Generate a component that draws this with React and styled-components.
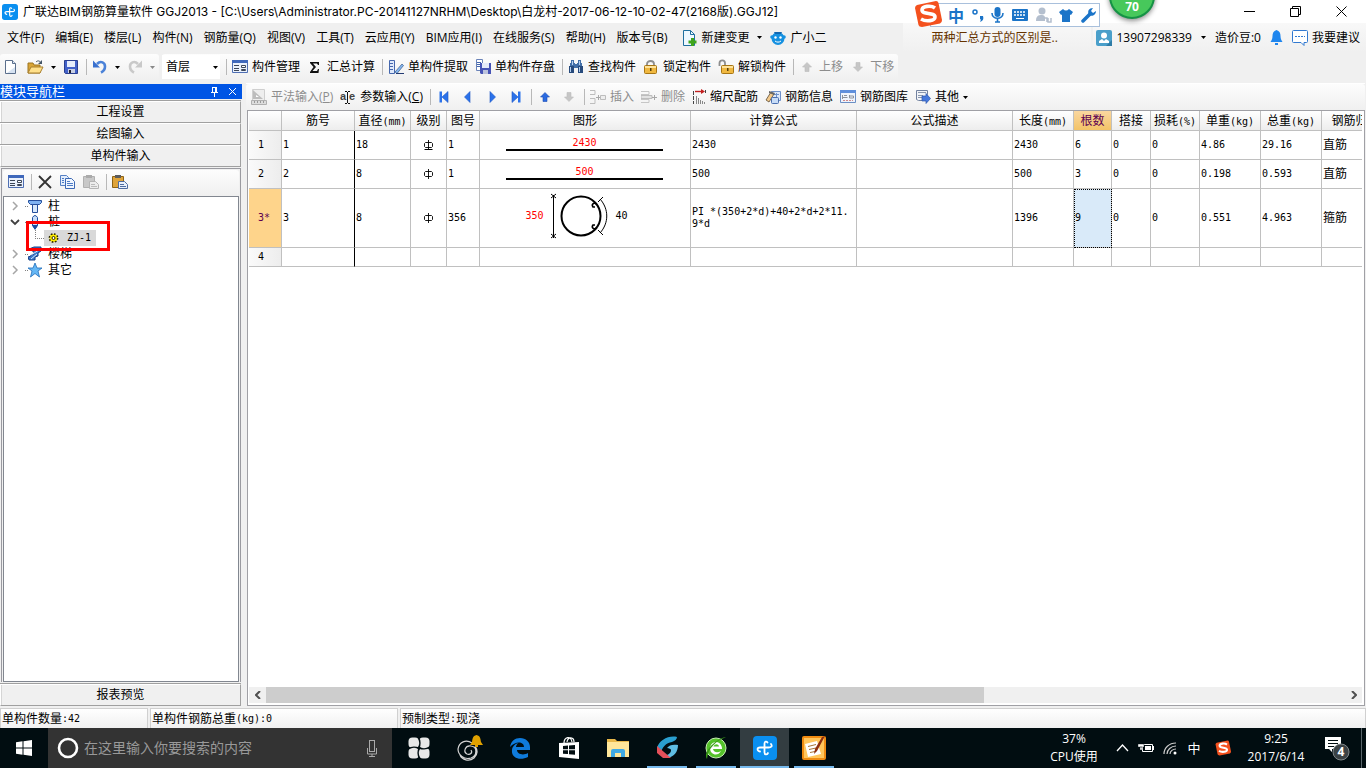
import React, { useState } from 'react';
import styled, { createGlobalStyle } from 'styled-components';

const uiFont = `'Open Sans', 'Noto Sans CJK SC', sans-serif`;
const gridFont = `'DejaVu Sans Mono', 'Noto Sans CJK SC', monospace`;

const GlobalStyle = createGlobalStyle`
  * { box-sizing: border-box; }
  body {
    margin: 0;
    overflow: hidden;
    background: #f0f0f0;
    color: #000;
    font: 12px/16px ${uiFont};
  }
  button, input, select {
    font: inherit;
    color: inherit;
    margin: 0;
    padding: 0;
    border: 0;
    border-radius: 0;
    background: transparent;
  }
  svg { display: block; flex: none; }
`;

const Page = styled.div`
  height: 100vh;
  display: flex;
  flex-direction: column;
  position: relative;
`;

/* ---------- title bar ---------- */

const TitleBar = styled.header`
  height: 23px;
  flex: none;
  display: flex;
  align-items: center;
  background: #fff;
  padding: 0 2px;
`;

const Title = styled.h1`
  flex: 1;
  margin: 0 0 0 5px;
  font: 12px/16px Inter, 'Noto Sans CJK SC', sans-serif;
  white-space: nowrap;
`;

const WindowButton = styled.button`
  width: 46px;
  height: 20px;
  display: flex;
  align-items: center;
  justify-content: center;
`;

/* ---------- menu ---------- */

const MenuRow = styled.div`
  height: 31px;
  flex: none;
  display: flex;
  align-items: flex-start;
`;

const Menu = styled.nav`
  flex: 1;
  height: 29px;
  padding-left: 7px;
  display: flex;
  align-items: center;
  gap: 11px;
`;

const MenuItem = styled.button`
  display: flex;
  align-items: center;
  gap: 4px;
  white-space: nowrap;
`;

const MenuExtras = styled.div`
  margin-left: 4px;
  display: flex;
  align-items: center;
  gap: 8px;
`;

const Notice = styled.a`
  width: 188px;
  height: 29px;
  padding-left: 28px;
  display: flex;
  align-items: center;
  color: #663300;
  text-decoration: none;
  background: linear-gradient(#f8f8f8, #f0f0f0);
`;

const Account = styled.div`
  height: 29px;
  margin-left: 2px;
  padding: 0 6px 0 3px;
  display: flex;
  align-items: center;
  gap: 9px;
  background: linear-gradient(#f8f8f8, #f0f0f0);
`;

/* ---------- toolbars ---------- */

const ToolRow = styled.div`
  height: 26px;
  flex: none;
  display: flex;
  gap: 3px;
`;

const Tools = styled.div`
  height: 26px;
  padding: 0 4px;
  display: flex;
  align-items: center;
  gap: 7px;
  border-radius: 3px;
  background: linear-gradient(#fdfdfd, #f0f0f0);
`;

const GridTools = styled(Tools)`
  flex: none;
  padding: 0 5px;
`;

const ToolButton = styled.button`
  display: flex;
  align-items: center;
  gap: 4px;
  white-space: nowrap;
  &:disabled { color: #8d8d8d; }
`;

const Group = styled.div`
  display: flex;
  align-items: center;
  gap: 8px;
`;

const Sep = styled.i`
  width: 1px;
  height: 16px;
  margin-right: -2px;
  background: #b8b8b8;
`;

const LevelBox = styled.label`
  position: relative;
  width: 58px;
  height: 24px;
  margin: 0 -1px 0 -4px;
  display: flex;
  align-items: center;
  background: #fff;
  svg { position: absolute; right: 2px; pointer-events: none; }
`;

const LevelSelect = styled.select`
  width: 100%;
  height: 24px;
  padding-left: 4px;
  appearance: none;
`;

/* ---------- left dock ---------- */

const Main = styled.main`
  flex: 1;
  min-height: 0;
  display: flex;
  padding-top: 3px;
`;

const Dock = styled.aside`
  width: 242px;
  flex: none;
  display: flex;
  flex-direction: column;
  margin: 1px 4px 0 0;
`;

const DockHead = styled.div`
  height: 15px;
  margin-bottom: 2px;
  display: flex;
  align-items: center;
  background: #0055e5;
  color: #fff;
  padding-right: 2px;
  gap: 6px;
  h2 {
    flex: 1;
    margin: 0;
    font-size: 13px;
    line-height: 15px;
    font-weight: 400;
  }
`;

const DockButton = styled.button`
  height: 22px;
  flex: none;
  margin-right: 1px;
  border: 1px solid #a0a0a0;
  border-top-color: #fff;
  border-left-color: #fff;
  background: #f0f0f0;
  box-shadow: inset 1px 0 #d5d5d5, 0 -1px #a0a0a0;
`;

const DockBody = styled.div`
  flex: 1;
  min-height: 0;
  margin: 1px 1px 2px 1px;
  padding: 1px 1px 0;
  display: flex;
  flex-direction: column;
  border: 1px solid #9a9aa0;
  border-width: 1px 1px 0 1px;
`;

const DockTools = styled(Tools)`
  height: 26px;
  flex: none;
  padding: 0 5px 2px;
`;

const Tree = styled.ul`
  flex: 1;
  margin: 0;
  padding: 1px 0 0 5px;
  list-style: none;
  position: relative;
  background: #fff;
  border: 1px solid #828790;
`;

const TreeItem = styled.li`
  height: 16px;
  display: flex;
  align-items: center;
  padding-left: ${props => (props.$child ? '12px' : '0')};
`;

const Expander = styled.button`
  width: 12px;
  height: 16px;
  display: flex;
  align-items: center;
  justify-content: center;
`;

const Dots = styled.i`
  width: 7px;
  padding-left: 4px;
  &::before {
    content: '';
    display: block;
    border-top: 1px dotted #808080;
  }
`;

const TreeLabel = styled.button`
  height: 16px;
  display: flex;
  align-items: center;
  gap: 6px;
  ${props => props.$selected && `
    gap: 8px;
    padding: 0 5px 0 4px;
    background: #d9d9d9;
  `}
`;

const RedMark = styled.div`
  position: absolute;
  left: 22px;
  top: 24px;
  width: 84px;
  height: 30px;
  border: 3px solid #fe0000;
  pointer-events: none;
`;

/* ---------- grid ---------- */

const Work = styled.section`
  flex: 1;
  min-width: 0;
  margin-right: 1px;
  display: flex;
  flex-direction: column;
  border-top: 1px solid #fff;
`;

const GridFrame = styled.div`
  flex: 1;
  min-height: 0;
  margin-left: 1px;
  display: flex;
  flex-direction: column;
  background: #fff;
  border: 1px solid #a0a0a5;
  padding: 0 2px 2px 1px;
`;

const GridScroll = styled.div`
  flex: 1;
  min-height: 0;
  overflow: hidden;
`;

const Table = styled.table`
  width: 1141px;
  table-layout: fixed;
  border-collapse: separate;
  border-spacing: 0;
`;

const Th = styled.th`
  height: 20px;
  padding: 0;
  font-weight: 400;
  line-height: 16px;
  white-space: nowrap;
  border-right: 1px solid #c0c0c0;
  border-bottom: 1px solid #c0c0c0;
  background: linear-gradient(#fff, #ededed);
  ${props => props.$active && `
    color: #5c0050;
    background: linear-gradient(#fad7a0, #f3c367);
  `}
`;

const RowHead = styled(Th)`
  height: auto;
  font: 10px/12px ${gridFont};
  padding-right: 8px;
  background: linear-gradient(90deg, #fafafa, #ededed);
  ${props => props.$active && `
    padding-right: 2px;
    color: #5c0050;
    background: #fed48b;
  `}
`;

const Td = styled.td`
  height: ${props => props.$h}px;
  padding: 0 2px 0 1px;
  overflow: hidden;
  border-right: 1px solid ${props => (props.$dark ? '#000' : '#c0c0c0')};
  border-bottom: 1px solid #c0c0c0;
  font: 10px/12px ${gridFont};
  word-break: break-all;
  ${props => props.$selected && `
    background: #d9eaf9;
    outline: 1px dotted #000;
    outline-offset: -1px;
  `}
`;

const Latin = styled.span`
  font: 10px/12px ${gridFont};
`;

const Kind = styled.span`
  font: 12px/16px ${uiFont};
`;

const BarShape = styled.div`
  width: 157px;
  margin: -2px auto 0;
  text-align: center;
  color: #f00;
  border-bottom: 2px solid #000;
`;

const HoopShape = styled.div`
  display: flex;
  align-items: center;
  justify-content: center;
  gap: 3px;
  padding: 0 16px 4px 0;
  em { font-style: normal; color: #f00; }
`;

const Center = styled.div`
  display: flex;
  justify-content: center;
`;

const ScrollBar = styled.div`
  height: 16px;
  flex: none;
  display: flex;
  background: #f0f0f0;
`;

const ScrollButton = styled.button`
  width: 17px;
  display: flex;
  align-items: center;
  justify-content: center;
`;

const Track = styled.div`
  flex: 1;
`;

const Thumb = styled.div`
  width: 66.5%;
  height: 16px;
  background: #cdcdcd;
`;

/* ---------- status bar ---------- */

const StatusBar = styled.footer`
  height: 22px;
  flex: none;
  display: flex;
  gap: 2px;
  padding-top: 2px;
`;

const StatusCell = styled.div`
  width: ${props => (props.$w ? `${props.$w}px` : 'auto')};
  flex: ${props => (props.$w ? 'none' : '1')};
  padding-left: 1px;
  display: flex;
  align-items: center;
  border: 1px solid #d0d0d0;
  border-bottom: 0;
  background: linear-gradient(#fff, #f0f0f0);
`;

/* ---------- task bar ---------- */

const TaskBar = styled.div`
  height: 40px;
  flex: none;
  display: flex;
  background: #010d11;
  color: #fff;
`;

const StartButton = styled.button`
  width: 48px;
  display: flex;
  align-items: center;
  justify-content: center;
`;

const Search = styled.label`
  width: 344px;
  margin-right: 1px;
  padding: 0 12px 0 9px;
  display: flex;
  align-items: center;
  gap: 5px;
  background: #333;
  input {
    flex: 1;
    min-width: 0;
    font-size: 14px;
    outline: 0;
  }
  input::placeholder { color: #999; opacity: 1; }
`;

const TaskButton = styled.button`
  width: ${props => (props.$wide ? '51px' : '49px')};
  display: flex;
  align-items: center;
  justify-content: center;
  background: ${props => (props.$active ? '#333d41' : 'transparent')};
  ${props => props.$line && `
    background: linear-gradient(#76b9ed, #76b9ed) center bottom / ${props.$line}px 2px no-repeat ${props.$active ? '#333d41' : 'transparent'};
  `}
`;

const Tray = styled.div`
  margin-left: auto;
  display: flex;
  align-items: center;
`;

const TrayText = styled.div`
  width: 72px;
  text-align: center;
  line-height: 18px;
`;

const TrayButton = styled.button`
  width: ${props => (props.$wide ? '34px' : '24px')};
  height: 40px;
  display: flex;
  align-items: center;
  justify-content: center;
  font-size: 13px;
`;

const NoticeButton = styled(TrayButton)`
  width: 50px;
  border-right: 1px solid #59656a;
  margin-right: 4px;
`;

/* ---------- floating widgets ---------- */

const ImeBar = styled.div`
  position: absolute;
  right: 266px;
  top: 0;
  display: flex;
`;

const ImeBody = styled.div`
  width: 170px;
  height: 24px;
  margin-top: 3px;
  padding: 0 3px 0 17px;
  display: flex;
  align-items: center;
  justify-content: space-between;
  color: #1b74c8;
  background: #fff;
  border: 1px solid #a9c0dc;
  font: bold 16px/20px 'Noto Sans CJK SC', sans-serif;
`;

const ImeLogo = styled.div`
  position: absolute;
  left: -16px;
  top: 0;
`;

const Ball = styled.div`
  position: absolute;
  right: 211px;
  top: -27px;
  width: 46px;
  height: 46px;
  padding-top: 24px;
  border-radius: 50%;
  border: 2px solid #159245;
  color: #fff;
  text-align: center;
  font: bold 12px/16px ${uiFont};
  background: #47c85b;
  box-shadow: 0 2px 5px rgba(0, 0, 0, 0.45);
`;

/* ---------- icons ---------- */

const Svg = ({ s = 16, w, h, vb, children }) => (
  <svg width={w || s} height={h || s} viewBox={vb || `0 0 ${w || s} ${h || s}`} fill="none" aria-hidden="true">
    {children}
  </svg>
);

const Caret = ({ off }) => (
  <Svg w={5} h={3}><path d="M0 0h5L2.5 3z" fill={off ? '#888' : '#000'} /></Svg>
);

const AppIcon = ({ s = 16 }) => (
  <Svg s={s} vb="0 0 24 24">
    <rect width="24" height="24" rx="4" fill="#0a8ff0" />
    <path d="M14.500 6.500c-1-1.500-3-1-3 1v9c0 2.500 3 2.500 3.500.500" stroke="#fff" strokeWidth="1.800" strokeLinecap="round" />
    <path d="M7 15.500c-3-.500-3.500-4 0-4h8.500c3 0 4-1.500 2.500-3.500" stroke="#fff" strokeWidth="1.800" strokeLinecap="round" />
  </Svg>
);

const NewIcon = () => (
  <Svg><path d="M1.500 1.500h7l3 3v10h-10z" fill="#fff" stroke="#5b6f8c" /><path d="M8.500 1.500v3h3" stroke="#5b6f8c" fill="#dfe9f5" /><path d="M3 14h8V8z" fill="#d7e3f2" /></Svg>
);

const OpenIcon = () => (
  <Svg w={17} h={16}><path d="M1 4h5l1 2h6v8H1z" fill="#d9a536" stroke="#9c7420" /><path d="M4 8h12l-3 6H1z" fill="#ffe08a" stroke="#a98030" /><path d="M9 3c2-2 4-1 5 1" stroke="#456" /><path d="M15 1v4h-4z" fill="#456" /></Svg>
);

const SaveIcon = () => (
  <Svg><path d="M1.500 1.500h13v13h-12l-1-1z" fill="#4261c9" stroke="#2a3f8f" /><path d="M4 2h8v6H4z" fill="#e6edfb" /><path d="M5 10h7v4H5z" fill="#c8d0e4" /><path d="M6 11h2v3H6z" fill="#223" /></Svg>
);

const UndoIcon = ({ flip, off }) => (
  <Svg>
    <g transform={flip ? 'matrix(-1 0 0 1 16 0)' : undefined}>
      <path d="M5 5c4-4 8-1 8 2.500 0 3-2 5-4 6" stroke={off ? '#c9c9c9' : '#4b82d8'} strokeWidth="2.600" />
      <path d="M1 1.500v7h7z" fill={off ? '#c9c9c9' : '#3970cf'} />
    </g>
  </Svg>
);

const FormIcon = () => (
  <Svg>
    <path d="M.500 1.500h15v12H.500z" fill="#eaf1fc" stroke="#4f6fb3" />
    <path d="M0 1h16v3H0z" fill="#3f68bb" />
    <path d="M2 6.500h5M2 9.500h5M2 11.500h5" stroke="#3c4658" />
    <path d="M9.500 6.500h4v2h-4zM9.500 10.500h4v1h-4z" fill="#fff" stroke="#3c4658" />
  </Svg>
);

const SumIcon = () => (
  <Svg><path d="M3 3h9v3h-1l-1-1.500H6L9 8l-3.500 4H10l1-2h1l-.500 4H3v-1l3.500-5L3 4z" fill="#111" /></Svg>
);

const ExtractIcon = () => (
  <Svg><path d="M1.500 1.500h5v13h-5z" fill="#dfe9fb" stroke="#4567ad" /><path d="M2 4.500h3M2 7.500h3M2 10.500h3" stroke="#4567ad" /><path d="M7 13L14 5l1.500 1.500L9 14.500z" fill="#87b6f0" stroke="#365a86" strokeWidth=".7" /><path d="M8 14.500h8" stroke="#223a72" /></Svg>
);

const StoreIcon = () => (
  <Svg><path d="M1.500.500h6v11h-6z" fill="#fff" stroke="#6a83b8" /><path d="M2 3.500h4M2 5.500h4M2 7.500h4" stroke="#4567ad" /><path d="M5 4h11v11H6l-1-1z" fill="#4653b5" /><path d="M7 4h7v5H7z" fill="#e4e9f8" /><path d="M8 11h5v4H8z" fill="#bcc3dd" /></Svg>
);

const FindIcon = () => (
  <Svg><path d="M3 1h3v3H3zM10 1h3v3h-3zM2 4h5v4H2zM9 4h5v4H9zM6 5h4v4H6z" fill="#426fa8" /><path d="M1 7h5v7H1zM10 7h5v7h-5z" fill="#274a7c" /><path d="M2 8h1v5H2zM11 8h1v5h-1zM4 2h1v4H4zM11 2h1v4h-1z" fill="#b5d0f0" /></Svg>
);

const LockIcon = ({ open }) => (
  <Svg>
    <path d={open ? 'M1.500 7V4c0-3.500 5.500-3.500 5.500 0v2' : 'M4 8V5c0-4 7-4 7 0v3'} stroke="#8e8e8e" strokeWidth="1.800" />
    <g transform={open ? 'translate(2 0)' : undefined}>
      <rect x="1.500" y="6.500" width="12" height="8" rx="1" fill="#f0b840" stroke="#a87614" />
      <path d="M2 7h11v2H2z" fill="#ffe39a" />
      <path d="M7 9h1.500v3H7z" fill="#59400b" />
    </g>
  </Svg>
);

const ArrowIcon = ({ down, off }) => (
  <Svg>
    <path transform={down ? 'rotate(180 8 8)' : undefined} d="M8 3.500l4.500 4.500H10v4.500H6V8H3.500z" fill={off ? '#c6c6c6' : '#2b6ae0'} stroke={off ? '#bcbcbc' : '#1c4eb4'} strokeWidth=".6" />
  </Svg>
);

const StepIcon = ({ back, end }) => (
  <Svg>
    <g transform={back ? 'matrix(-1 0 0 1 16 0)' : undefined}>
      <path d={end ? 'M4 2.500v11L10 8z' : 'M6 2.500v11L11.500 8z'} fill="#2b72ea" stroke="#1c56c4" strokeWidth=".6" />
      {end && <path d="M10 2.500h2.500v11H10z" fill="#2b72ea" />}
    </g>
  </Svg>
);

const RulerIcon = () => (
  <Svg><path d="M1.500.500h12v11h-12z" fill="#eee" stroke="#cfcfcf" /><path d="M2 1l10 9H2z" fill="#bdbdbd" /><path d="M5 6v2h3z" fill="#fff" /><path d="M.500 11.500h15v4H.500z" fill="#ddd" stroke="#b0b0b0" /><path d="M3.500 12v2M6.500 12v2M9.500 12v2M12.500 12v2" stroke="#999" /></Svg>
);

const ParamIcon = () => (
  <Svg>
    <text x="0" y="11" fontSize="11" fontWeight="700" fontFamily="Liberation Sans, sans-serif" fill="#444">a</text>
    <text x="9" y="11" fontSize="11" fontWeight="700" fontFamily="Liberation Sans, sans-serif" fill="#444">e</text>
    <path d="M5 2.500h2M8 2.500h2M7.500 3v11M5 14.500h2M8 14.500h2" stroke="#111" />
  </Svg>
);

const InsertIcon = () => (
  <Svg><path d="M0 1.500h5v4H0M0 9.500h5v5H0" stroke="#bdbdbd" /><path d="M6 8.500h4M8.500 6v5" stroke="#a8a8a8" /><path d="M10.500 6.500h5v4h-5z" fill="#eee" stroke="#bdbdbd" /></Svg>
);

const DeleteRowIcon = () => (
  <Svg><path d="M0 2.500h8v3H0M0 10.500h8v3H0" stroke="#c6c6c6" /><path d="M0 6.500h11v3H0z" fill="#e2e2e2" stroke="#bdbdbd" /><path d="M11 8.500h5M13.500 6v5" stroke="#a8a8a8" /></Svg>
);

const ScaleIcon = () => (
  <Svg w={14} h={16}><path d="M1.500 2v13" stroke="#444" strokeDasharray="4 1" /><path d="M13.500 1v3" stroke="#444" /><path d="M3 2.500h7" stroke="#c22020" strokeWidth="1.400" /><path d="M9 0l4 2.500L9 5z" fill="#c22020" /><path d="M4.500 7v8M6.500 9v6M8.500 11v4M10.500 12v3M12.500 13v2" stroke="#888" /></Svg>
);

const InfoIcon = () => (
  <Svg><path d="M6.500 2.500h9v9h-9z" fill="#dce9fb" stroke="#6f91ca" /><path d="M8 5.500h6M11.500 4v7" stroke="#6f91ca" /><path d="M1 11L6 3l3 2-5 8z" fill="#f3c98b" stroke="#5c4b34" strokeWidth=".8" /><path d="M4 2l6 2-1 2-5-2z" fill="#666" /><rect x="6.500" y="8.500" width="7" height="6" rx="1" fill="#c7dcf7" stroke="#4a6fb0" /></Svg>
);

const LibIcon = () => (
  <Svg><path d="M.500 1.500h15v12H.500z" fill="#eef4fd" stroke="#6b8fc4" /><path d="M0 1h16v3H0z" fill="#5e8fdc" /><path d="M2.500 6v4M2.500 8.500h5M4 6.500h3M9.500 6v3h4v-2h-4" stroke="#8b929c" /><path d="M3 11.500h10" stroke="#d08a8a" strokeDasharray="2 1" /></Svg>
);

const MoreIcon = () => (
  <Svg><path d="M1.500 1.500h11v4l-2 6h-7l-2-1z" fill="#f2f4f8" stroke="#7282a0" /><path d="M3 3.500h8M3 6.500h5M3 8.500h4" stroke="#8a97ad" /><path d="M7 7h4V4.500l4.500 5-4.500 5V12H7z" fill="#4779dc" stroke="#2b57ac" strokeWidth=".7" /></Svg>
);

const NewChangeIcon = () => (
  <Svg w={15} h={16}><path d="M1.500.500h7l4 4v11h-11z" fill="#eef8ff" stroke="#1f6f9f" /><path d="M8.500.500v4h4" stroke="#1f6f9f" /><path d="M9 8h3v2.500h2.500v3H12V16H9v-2.500H6.500v-3H9z" fill="#3fa51c" /></Svg>
);

const MascotIcon = () => (
  <Svg>
    <circle cx="8" cy="8.500" r="6.500" fill="#1590e0" />
    <circle cx="2" cy="7" r="1.800" fill="#1590e0" />
    <circle cx="14" cy="7" r="1.800" fill="#1590e0" />
    <path d="M4 2h8l-1 2H5z" fill="#1267b0" />
    <circle cx="5.500" cy="7.500" r="1.200" fill="#fff" />
    <circle cx="10.500" cy="7.500" r="1.200" fill="#fff" />
    <path d="M5 11c2 1.500 4 1.500 6 0" stroke="#fff" />
  </Svg>
);

const UserIcon = () => (
  <Svg><rect width="16" height="16" rx="2" fill="#4a9fca" /><path d="M10 16l6-6v6z" fill="#2f7ca6" /><circle cx="8" cy="5.500" r="3" fill="#fff" /><path d="M3 13V11l3-2 2 2 2-2 3 2v2z" fill="#fff" /></Svg>
);

const BellIcon = () => (
  <Svg w={13} h={15}><path d="M6.500 0c3 1 4 3 4 6 0 3 1 4 2 6H.500c1-2 2-3 2-6 0-3 1-5 4-6z" fill="#1f86ee" /><path d="M5 13h3v2H5z" fill="#1f86ee" /></Svg>
);

const BubbleIcon = () => (
  <Svg><path d="M1.500.500h13q1 0 1 1v10q0 1-1 1H12v3l-3-3H1.500q-1 0-1-1v-10q0-1 1-1z" stroke="#3179d0" fill="#fff" /><path d="M3 6.500h10" stroke="#3179d0" strokeDasharray="2 1" /></Svg>
);

const CrossIcon = () => (
  <Svg><path d="M2 2l12 12M14 2L2 14" stroke="#333" strokeWidth="1.800" /></Svg>
);

const CopyIcon = () => (
  <Svg><path d="M.500 1.500h6l2 2v8h-8z" fill="#e4eefc" stroke="#5580c4" /><path d="M5.500 4.500h6l3 3v7h-9z" fill="#f0f6ff" stroke="#3c69b5" /><path d="M7 7.500h3M7 9.500h6M7 11.500h6M2 4.500h2M2 6.500h2M2 8.500h2" stroke="#4d7cc6" /></Svg>
);

const PasteIcon = ({ off }) => (
  <Svg><path d="M.500 2.500h11v11h-11z" fill={off ? '#c8c8c8' : '#dfa43a'} stroke={off ? '#b0b0b0' : '#8d6316'} /><path d="M3 1h6v3H3z" fill={off ? '#aaa' : '#5c5c5c'} /><path d="M6.500 7.500h6l3 3v4h-9z" fill={off ? '#ededed' : '#e8f0fc'} stroke={off ? '#b5b5b5' : '#4f6c9f'} /><path d="M8 10.500h4M8 12.500h6" stroke={off ? '#bbb' : '#4f6c9f'} /></Svg>
);

const PinIcon = () => (
  <Svg w={9} h={10}><path d="M2.500 1v4M2 .500h5M1 5.500h7M4.500 6v4" stroke="#fff" /><path d="M5 1h2v4H5z" fill="#fff" /></Svg>
);

const ChevronIcon = ({ open }) => (
  <Svg w={10} h={10}>
    {open ? <path d="M1 3l4 4 4-4" stroke="#404040" strokeWidth="1.800" /> : <path d="M3 1l4 4-4 4" stroke="#a6a6a6" strokeWidth="1.500" />}
  </Svg>
);

const treeIcons = {
  column: <Svg w={14} h={16}><path d="M.500 2.500h13v2l-2 2h-9l-2-2z" fill="#7fb2f2" stroke="#244e9b" /><path d="M4.500 6.500h5v8h-5z" fill="#d7e9fd" stroke="#244e9b" /></Svg>,
  pile: <Svg w={14} h={16}><path d="M4.500 3.500q2.500-4 5 0v8L7 15l-2.500-3.500z" fill="#c8defa" stroke="#1c4ea0" /><path d="M4 11h6l-3 5z" fill="#1c4ea0" /></Svg>,
  stair: <Svg w={14} h={16}><path d="M1 3l5-2h7v4l-3 2v3l-3 1v3H1l-1-3 3-1V9l3-1V6z" fill="#3c78cc" stroke="#173f86" /><path d="M3 5l7-2M3 9l8-5M3 13l6-5" stroke="#d8e8fc" /></Svg>,
  other: <Svg w={14} h={16}><path d="M7 1l2 5h5l-4 3 1.500 6L7 11.500 2.500 15 4 9 0 6h5z" fill="#65b7f5" stroke="#1f6cba" strokeWidth=".8" /></Svg>,
};

const GearIcon = () => (
  <Svg w={11} h={11}>
    <circle cx="5.500" cy="5" r="4" fill="#ffee00" stroke="#2a2700" strokeWidth="1.800" strokeDasharray="1.600 1.540" />
    <circle cx="5.500" cy="5" r="3.200" fill="#ffee00" />
    <circle cx="5.500" cy="5" r="1.500" fill="#fff" stroke="#2a2700" />
  </Svg>
);

const SogouIcon = ({ s }) => (
  <Svg s={s} vb="0 0 28 28">
    <path d="M3 5L22 1q2 0 2.500 2L28 20q0 3-2 3.500L8 27q-3 0-3.500-2L1 8q0-2 2-3z" fill="#f4511e" />
    <path d="M21 8c-4-3-13-2-13 2 0 5 13 2 13 7 0 4-9 5-14 2" stroke="#fff" strokeWidth="3.600" />
  </Svg>
);

/* ---------- data ---------- */

const menus = ['文件(F)', '编辑(E)', '楼层(L)', '构件(N)', '钢筋量(Q)', '视图(V)', '工具(T)', '云应用(Y)', 'BIM应用(I)', '在线服务(S)', '帮助(H)', '版本号(B)'];

const columns = [
  { w: 73, text: '筋号' },
  { w: 56, text: '直径', unit: '(mm)' },
  { w: 36, text: '级别' },
  { w: 33, text: '图号' },
  { w: 211, text: '图形' },
  { w: 166, text: '计算公式' },
  { w: 156, text: '公式描述' },
  { w: 61, text: '长度', unit: '(mm)' },
  { w: 38, text: '根数', active: true },
  { w: 39, text: '搭接' },
  { w: 49, text: '损耗', unit: '(%)' },
  { w: 61, text: '单重', unit: '(kg)' },
  { w: 61, text: '总重', unit: '(kg)' },
  { w: 68, text: '钢筋归类' },
];

const Grade = ({ base }) => (
  <Center>
    <Svg w={11} h={11}>
      <path d="M2.500 2.500h6l1 1v3l-1 1h-6l-1-1v-3zM5.500 0v10" stroke="#000" strokeWidth=".9" />
      {base && <path d="M1.500 9.500h8" stroke="#000" />}
    </Svg>
  </Center>
);

const Hoop = () => (
  <HoopShape>
    <em>350</em>
    <Svg w={66} h={46}>
      <path d="M6.500 2v43M4 1l5 4M9 1L4 5M4 41l5 4M9 41l-5 4" stroke="#000" />
      <circle cx="34" cy="23" r="19.500" stroke="#000" strokeWidth="2" />
      <path d="M50 11c-3-2-6 0-4 3h2M50 35c-3 2-6 0-4-3h2" stroke="#000" strokeWidth="1.600" />
      <path d="M51 9l5-5M53 6c9 10 9 24 0 34M51 37l5 5" stroke="#000" />
    </Svg>
    <span>40</span>
  </HoopShape>
);

const rows = [
  { no: '1', h: 29, cells: ['1', '18', <Grade base />, '1', <BarShape>2430</BarShape>, '2430', '', '2430', '6', '0', '0', '4.86', '29.16', <Kind>直筋</Kind>] },
  { no: '2', h: 29, cells: ['2', '8', <Grade />, '1', <BarShape>500</BarShape>, '500', '', '500', '3', '0', '0', '0.198', '0.593', <Kind>直筋</Kind>] },
  { no: '3*', h: 59, active: true, cells: ['3', '8', <Grade />, '356', <Hoop />, 'PI *(350+2*d)+40+2*d+2*11.9*d', '', '1396', '9', '0', '0', '0.551', '4.963', <Kind>箍筋</Kind>] },
  { no: '4', h: 19, cells: Array(14).fill('') },
];

const App = () => {
  const [level, setLevel] = useState('首层');
  const [query, setQuery] = useState('');

  return (
    <Page>
      <GlobalStyle />
      <TitleBar>
        <AppIcon />
        <Title>广联达BIM钢筋算量软件 GGJ2013 - [C:\Users\Administrator.PC-20141127NRHM\Desktop\白龙村-2017-06-12-10-02-47(2168版).GGJ12]</Title>
        <WindowButton aria-label="最小化"><Svg s={11}><path d="M0 5.500h11" stroke="#000" /></Svg></WindowButton>
        <WindowButton aria-label="还原"><Svg s={11}><path d="M.500 2.500h8v8h-8zM2.500 2.500v-2h8v8h-2" stroke="#000" /></Svg></WindowButton>
        <WindowButton aria-label="关闭"><Svg s={11}><path d="M.500.500l10 10M10.500.500l-10 10" stroke="#000" /></Svg></WindowButton>
      </TitleBar>

      <MenuRow>
        <Menu>
          {menus.map(m => <MenuItem key={m}>{m}</MenuItem>)}
          <MenuExtras>
            <MenuItem><NewChangeIcon />新建变更</MenuItem>
            <Caret />
            <MenuItem><MascotIcon />广小二</MenuItem>
          </MenuExtras>
        </Menu>
        <Notice href="#">两种汇总方式的区别是..</Notice>
        <Account>
          <MenuItem><UserIcon />13907298339</MenuItem>
          <Caret />
          <MenuItem>造价豆:0</MenuItem>
          <BellIcon />
          <MenuItem><BubbleIcon />我要建议</MenuItem>
        </Account>
      </MenuRow>

      <ToolRow>
        <Tools>
          <ToolButton aria-label="新建"><NewIcon /></ToolButton>
          <ToolButton aria-label="打开"><OpenIcon /></ToolButton>
          <Caret />
          <ToolButton aria-label="保存"><SaveIcon /></ToolButton>
          <Sep />
          <ToolButton aria-label="撤销"><UndoIcon /></ToolButton>
          <Caret />
          <ToolButton aria-label="重做" disabled><UndoIcon flip off /></ToolButton>
          <Caret off />
        </Tools>
        <Tools>
          <LevelBox>
            <LevelSelect aria-label="楼层" value={level} onChange={e => setLevel(e.target.value)}>
              <option>首层</option>
              <option>基础层</option>
            </LevelSelect>
            <Caret />
          </LevelBox>
          <Sep />
          <ToolButton><FormIcon />构件管理</ToolButton>
          <ToolButton><SumIcon />汇总计算</ToolButton>
          <Sep />
          <ToolButton><ExtractIcon />单构件提取</ToolButton>
          <ToolButton><StoreIcon />单构件存盘</ToolButton>
          <Sep />
          <ToolButton><FindIcon />查找构件</ToolButton>
          <ToolButton><LockIcon />锁定构件</ToolButton>
          <ToolButton><LockIcon open />解锁构件</ToolButton>
          <Sep />
          <ToolButton disabled><ArrowIcon off />上移</ToolButton>
          <ToolButton disabled><ArrowIcon down off />下移</ToolButton>
        </Tools>
      </ToolRow>

      <Main>
        <Dock>
          <DockHead>
            <h2>模块导航栏</h2>
            <button aria-label="固定"><PinIcon /></button>
            <button aria-label="关闭面板"><Svg w={15} h={9}><path d="M4 1l7 7M11 1L4 8" stroke="#fff" /></Svg></button>
          </DockHead>
          <DockButton>工程设置</DockButton>
          <DockButton>绘图输入</DockButton>
          <DockButton>单构件输入</DockButton>
          <DockBody>
            <DockTools>
              <ToolButton aria-label="属性"><FormIcon /></ToolButton>
              <Sep />
              <ToolButton aria-label="删除构件"><CrossIcon /></ToolButton>
              <ToolButton aria-label="复制"><CopyIcon /></ToolButton>
              <ToolButton aria-label="粘贴" disabled><PasteIcon off /></ToolButton>
              <Sep />
              <ToolButton aria-label="粘贴构件"><PasteIcon /></ToolButton>
            </DockTools>
            <Tree>
              <TreeItem><Expander aria-label="展开柱"><ChevronIcon /></Expander><Dots /><TreeLabel>{treeIcons.column}柱</TreeLabel></TreeItem>
              <TreeItem><Expander aria-label="收起桩"><ChevronIcon open /></Expander><Dots /><TreeLabel>{treeIcons.pile}桩</TreeLabel></TreeItem>
              <TreeItem $child>
                <Svg w={23} h={16}><path d="M14.500 0v8M14 8.500h9" stroke="#808080" strokeDasharray="1 1" /></Svg>
                <TreeLabel $selected><GearIcon /><Latin>ZJ-1</Latin></TreeLabel>
              </TreeItem>
              <TreeItem><Expander aria-label="展开楼梯"><ChevronIcon /></Expander><Dots /><TreeLabel>{treeIcons.stair}楼梯</TreeLabel></TreeItem>
              <TreeItem><Expander aria-label="展开其它"><ChevronIcon /></Expander><Dots /><TreeLabel>{treeIcons.other}其它</TreeLabel></TreeItem>
              <RedMark />
            </Tree>
          </DockBody>
          <DockButton>报表预览</DockButton>
        </Dock>

        <Work>
          <GridTools>
            <ToolButton disabled><RulerIcon /><span>平法输入(<u>P</u>)</span></ToolButton>
            <ToolButton><ParamIcon /><span>参数输入(<u>C</u>)</span></ToolButton>
            <Sep />
            <Group>
              <ToolButton aria-label="首行"><StepIcon back end /></ToolButton>
              <ToolButton aria-label="上一行"><StepIcon back /></ToolButton>
              <ToolButton aria-label="下一行"><StepIcon /></ToolButton>
              <ToolButton aria-label="末行"><StepIcon end /></ToolButton>
            </Group>
            <Sep />
            <Group>
              <ToolButton aria-label="上移行"><ArrowIcon /></ToolButton>
              <ToolButton aria-label="下移行" disabled><ArrowIcon down off /></ToolButton>
            </Group>
            <Sep />
            <ToolButton disabled><InsertIcon />插入</ToolButton>
            <ToolButton disabled><DeleteRowIcon />删除</ToolButton>
            <ToolButton><ScaleIcon />缩尺配筋</ToolButton>
            <ToolButton><InfoIcon />钢筋信息</ToolButton>
            <ToolButton><LibIcon />钢筋图库</ToolButton>
            <ToolButton><MoreIcon />其他<Caret /></ToolButton>
          </GridTools>
          <GridFrame>
            <GridScroll>
              <Table>
                <colgroup>
                  <col width="33" />
                  {columns.map(c => <col key={c.text} width={c.w} />)}
                </colgroup>
                <thead>
                  <tr>
                    <Th />
                    {columns.map(c => (
                      <Th key={c.text} scope="col" $active={c.active}>
                        {c.text}{c.unit && <Latin>{c.unit}</Latin>}
                      </Th>
                    ))}
                  </tr>
                </thead>
                <tbody>
                  {rows.map(row => (
                    <tr key={row.no}>
                      <RowHead scope="row" $active={row.active}>{row.no}</RowHead>
                      {row.cells.map((cell, i) => (
                        <Td key={i} $h={row.h} $dark={i === 0} $selected={row.active && i === 8}>{cell}</Td>
                      ))}
                    </tr>
                  ))}
                </tbody>
              </Table>
            </GridScroll>
            <ScrollBar>
              <ScrollButton aria-label="向左滚动"><Svg w={6} h={8}><path d="M5 0L1 4l4 4" stroke="#505050" strokeWidth="2" /></Svg></ScrollButton>
              <Track><Thumb /></Track>
              <ScrollButton aria-label="向右滚动"><Svg w={6} h={8}><path d="M1 0l4 4-4 4" stroke="#505050" strokeWidth="2" /></Svg></ScrollButton>
            </ScrollBar>
          </GridFrame>
        </Work>
      </Main>

      <StatusBar>
        <StatusCell $w={148}>单构件数量<Latin>:42</Latin></StatusCell>
        <StatusCell $w={248}>单构件钢筋总重<Latin>(kg):0</Latin></StatusCell>
        <StatusCell>预制类型<Latin>:</Latin>现浇</StatusCell>
      </StatusBar>

      <TaskBar>
        <StartButton aria-label="开始">
          <Svg><path d="M0 2.200l6.500-.900v6.200H0zM7.500 1.200L16 0v7.500H7.500zM0 8.500h6.500v6.200L0 13.800zM7.500 8.500H16V16l-8.500-1.200z" fill="#fff" /></Svg>
        </StartButton>
        <Search>
          <Svg s={22}><circle cx="11" cy="11" r="9" stroke="#fff" strokeWidth="2.600" /></Svg>
          <input aria-label="搜索" placeholder="在这里输入你要搜索的内容" value={query} onChange={e => setQuery(e.target.value)} />
          <Svg w={16} h={18}><rect x="5.500" y="1.500" width="5" height="11" stroke="#aaa" /><path d="M3.500 9v6h9V9M8 15v3M5 17.500h6" stroke="#aaa" /></Svg>
        </Search>
        <TaskButton $wide aria-label="浏览器">
          <Svg s={22}>
            <rect x=".5" y=".5" width="10.500" height="10.500" rx="4" fill="#e8e8e8" />
            <rect x="11" y=".5" width="10.500" height="10.500" rx="4" fill="#e8e8e8" />
            <rect x=".5" y="11" width="10.500" height="10.500" rx="4" fill="#e8e8e8" />
            <rect x="11" y="11" width="10.500" height="10.500" rx="4" fill="#e8e8e8" />
            {[0, 90, 180, 270].map(a => (
              <path key={a} transform={`rotate(${a} 11 11)`} d="M11 11C12 8 13 4 10 0" stroke="#010d11" strokeWidth="1.400" />
            ))}
          </Svg>
        </TaskButton>
        <TaskButton $wide aria-label="通知助手">
          <Svg w={28} h={28}>
            <path d="M16 9C10 5 3 8 2 15c0 6 6 11 13 9 6-2 7-11 0-12-6-1-8 6-4 8 3 1 6-1 4-4M4 21c2 5 9 7 14 3 4-4 4-8 1-12" stroke="#d6d6d6" strokeWidth="1.200" />
            <path d="M20.500 1c4 1 4 4 4.500 7l2 3H14l2-3c.500-3 .500-6 4.500-7z" fill="#e0a100" /><path d="M19 11h3v2h-3z" fill="#e0a100" />
          </Svg>
        </TaskButton>
        <TaskButton aria-label="Edge">
          <Svg s={22}><path d="M1 10C2 4 6 1 11 1c6 0 10 4 10 9v3H8c0 4 6 6 11 3v4c-8 4-17 1-16-7 0-3 3-6 6-7-1 1-2 3-2 4h8c0-6-9-6-14 0z" fill="#0f7bdc" /></Svg>
        </TaskButton>
        <TaskButton aria-label="应用商店">
          <Svg w={22} h={24}><path d="M6 7c0-6 7-8 8-1M9 6c1-6 7-5 7 0" stroke="#fff" strokeWidth="1.200" /><path d="M1 7l20-1v17L1 21z" fill="#fff" /><path d="M5 10l5-.400v3.600H5zM11 9.500l6-.500v4.200h-6zM5 14.200h5v3.900l-5-.400zM11 14.200h6v4.600l-6-.500z" fill="#010d11" /></Svg>
        </TaskButton>
        <TaskButton aria-label="文件资源管理器">
          <Svg w={22} h={20}><path d="M0 1h8l2 2h12v16H0z" fill="#e9b84a" /><path d="M0 4h22v15H0z" fill="#ffe69a" /><path d="M4 19v-6q0-2 2-2h10q2 0 2 2v6h-4v-4H8v4z" fill="#3fa9e4" /></Svg>
        </TaskButton>
        <TaskButton $line={40} aria-label="广联达G+">
          <Svg s={24}>
            <path d="M22 1C14-1 4 4 2 12l4 5c1-6 5-10 11-11 3-1 5-3 5-5z" fill="#2a9fd0" />
            <path d="M12 12c2-3 6-4 11-3 0 7-4 12-11 13-2 0-4-1-5-3 5 1 9-1 9-5 0-1-2-2-4-2z" fill="#5fbde4" />
            <path d="M2 10l14 12H8l-6-5z" fill="#e5505a" />
          </Svg>
        </TaskButton>
        <TaskButton $line={40} aria-label="360浏览器">
          <Svg s={24}>
            <circle cx="12" cy="12" r="10" fill="#55c22b" stroke="#c8efb4" />
            <path d="M6 12c1-8 11-8 12 0v1H9c1 4 5 4 8 2-3 6-11 4-11-3z" fill="#fff" /><path d="M9.500 10.500c1-3 5-3 5.500 0z" fill="#55c22b" />
            <path d="M3 23C-2 16 13 2 22 1 12 5 4 12 3 23z" fill="#3a9a18" />
          </Svg>
        </TaskButton>
        <TaskButton $line={49} $active aria-label="算量软件"><AppIcon s={24} /></TaskButton>
        <TaskButton $line={40} aria-label="写字板">
          <Svg s={24}><rect width="24" height="24" rx="2" fill="#f08c12" /><path d="M2 2h20v20H2z" fill="#ffc65c" /><path d="M3 8l12-3 4 13-13 3z" fill="#fff" /><path d="M6 10.500l8-2M7 13.500l7-1.500M8 16.500l5-1" stroke="#a77438" /><path d="M23 0l-8 15-3 3 1-5 7-12z" fill="#8d2f10" /></Svg>
        </TaskButton>

        <Tray>
          <TrayText>37%<br />CPU使用</TrayText>
          <TrayButton aria-label="显示隐藏的图标"><Svg w={13} h={8}><path d="M1 7l5.500-6L12 7" stroke="#fff" strokeWidth="1.300" /></Svg></TrayButton>
          <TrayButton aria-label="电源"><Svg w={16} h={12}><path d="M4.500 2.500h10v7h-10z" stroke="#fff" /><path d="M7 4h6v4H7zM15 4h1v4h-1z" fill="#fff" /><path d="M1.500 0v2M4.500 0v2M0 2h6v3H0zM2 5h2v3H2z" fill="#fff" stroke="#010d11" strokeWidth=".4" /></Svg></TrayButton>
          <TrayButton aria-label="网络"><Svg w={14} h={13}><path d="M1 12C1 6 6 1 13 1M4 12c0-4 4-8 9-8M7 12c0-3 3-5 6-5" stroke="#ccc" strokeWidth="1.200" /><circle cx="12" cy="11" r="1.500" fill="#fff" /></Svg></TrayButton>
          <TrayButton>中</TrayButton>
          <TrayButton $wide aria-label="搜狗输入法"><SogouIcon s={16} /></TrayButton>
          <TrayText>9:25<br />2017/6/14</TrayText>
          <NoticeButton aria-label="通知中心">
            <Svg w={26} h={26}>
              <path d="M1 2h16v12H8v3l-3-3H1z" fill="#fff" /><path d="M4 5.500h10M4 8.500h10M4 11.500h6" stroke="#010d11" />
              <circle cx="17" cy="17" r="8" fill="#3b4245" stroke="#80878a" />
              <text x="17" y="21" textAnchor="middle" fontSize="12" fontWeight="700" fontFamily="Open Sans, sans-serif" fill="#fff">4</text>
            </Svg>
          </NoticeButton>
        </Tray>
      </TaskBar>

      <ImeBar>
        <ImeBody>
          <span>中</span>
          <Svg w={12} h={14}><circle cx="3" cy="4" r="2" stroke="#1b74c8" strokeWidth="1.500" /><path d="M8 8h3c1 3 0 5-3 6 1-2 1-3 0-3z" fill="#1b74c8" /></Svg>
          <Svg w={13} h={16}><rect x="3.500" y="0" width="6" height="10" rx="3" fill="#1b74c8" /><path d="M1 6c0 7 11 7 11 0M6.500 11v4M4 15h5" stroke="#1b74c8" strokeWidth="1.600" /></Svg>
          <Svg w={16} h={12}><rect width="16" height="12" rx="1" fill="#1b74c8" /><path d="M2 3h12M2 6h12" stroke="#fff" strokeWidth="1.500" strokeDasharray="2 1" /><path d="M4 9.500h8" stroke="#fff" /></Svg>
          <Svg w={16} h={16}><circle cx="6" cy="4" r="3.500" fill="#b4bfce" /><path d="M0 14c0-5 2-6 6-6 2 0 3 1 3 3v3z" fill="#b4bfce" /><path d="M8 11h3v4M15 11v4h-3v-4" stroke="#b4bfce" strokeWidth="1.500" /></Svg>
          <Svg w={14} h={14}><path d="M4 1q3 3 6 0l4 3-2 3-1-.500V14H3V6.500L2 7 0 4z" fill="#1b74c8" /></Svg>
          <Svg w={15} h={15}><path d="M2 13L9 6" stroke="#1b74c8" strokeWidth="3.500" strokeLinecap="round" /><path d="M12 0c-4 0-6 3-4 7 3 2 7 0 7-4l-3 2-2-2z" fill="#1b74c8" /></Svg>
        </ImeBody>
        <ImeLogo><SogouIcon s={28} /></ImeLogo>
      </ImeBar>
      <Ball>70</Ball>
    </Page>
  );
};

export default App;
